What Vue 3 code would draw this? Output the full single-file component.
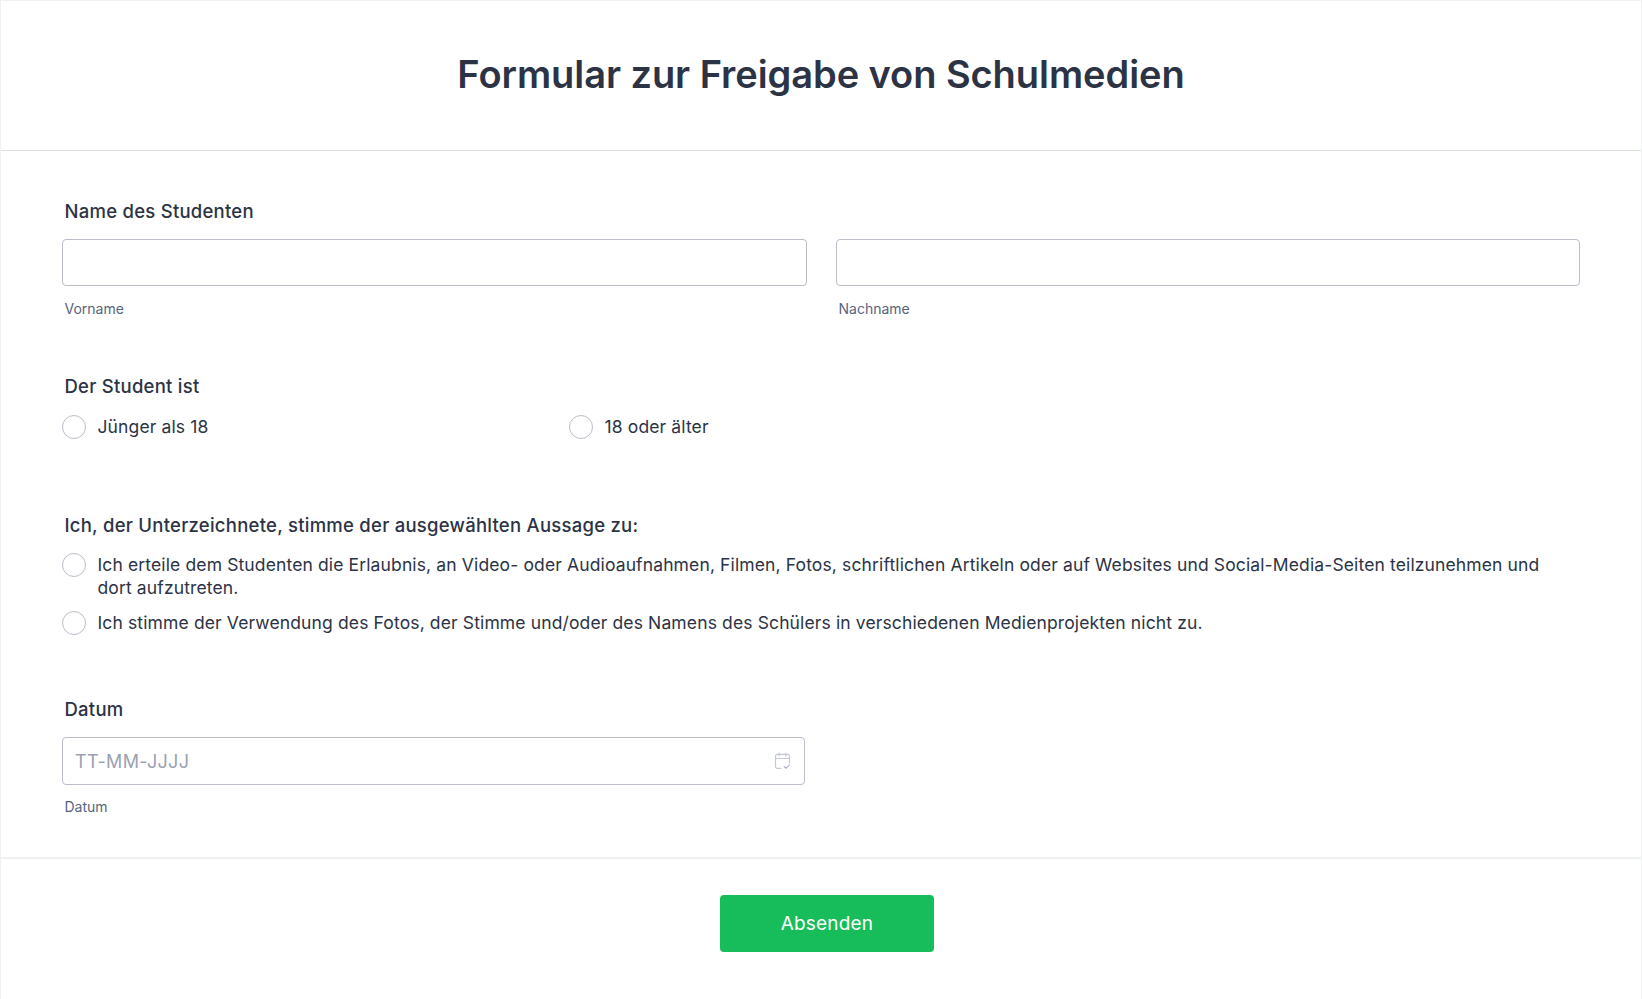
<script setup>
const ages = ['Jünger als 18', '18 oder älter']
const consents = [
  'Ich erteile dem Studenten die Erlaubnis, an Video- oder Audioaufnahmen, Filmen, Fotos, schriftlichen Artikeln oder auf Websites und Social-Media-Seiten teilzunehmen und dort aufzutreten.',
  'Ich stimme der Verwendung des Fotos, der Stimme und/oder des Namens des Schülers in verschiedenen Medienprojekten nicht zu.'
]
</script>

<template>
  <main class="card">
    <header class="head">
      <h1>Formular zur Freigabe von Schulmedien</h1>
    </header>
    <form class="body" @submit.prevent>
      <section class="field name-field">
        <label class="label">Name des Studenten</label>
        <div class="name-grid">
          <div>
            <input class="input" type="text" />
            <div class="sub">Vorname</div>
          </div>
          <div>
            <input class="input" type="text" />
            <div class="sub">Nachname</div>
          </div>
        </div>
      </section>

      <section class="field age-field">
        <label class="label">Der Student ist</label>
        <div class="age-grid">
          <div v-for="a in ages" :key="a" class="opt">
            <span class="radio"></span><span class="opt-text">{{ a }}</span>
          </div>
        </div>
      </section>

      <section class="field consent-field">
        <label class="label">Ich, der Unterzeichnete, stimme der ausgewählten Aussage zu:</label>
        <div class="consent-list">
          <div v-for="c in consents" :key="c" class="opt">
            <span class="radio"></span><span class="opt-text">{{ c }}</span>
          </div>
        </div>
      </section>

      <section class="field date-field">
        <label class="label">Datum</label>
        <div class="date-box">
          <input class="input date-input" type="text" placeholder="TT-MM-JJJJ" />
          <svg class="cal" viewBox="0 0 18 18" fill="none" stroke="#c3c8d3" stroke-width="1.2" stroke-linecap="round" stroke-linejoin="round">
            <path d="M7.5 16.8H3.6a2 2 0 0 1-2-2V4a2 2 0 0 1 2-2h10.8a2 2 0 0 1 2 2v7" />
            <path d="M1.6 6.4h14.8M5.4 .6v3.2M12.6 .6v3.2" />
            <path d="M10.8 14.8l1.9 1.9 3.7-3.7" stroke="#aeb4c1" />
          </svg>
        </div>
        <div class="sub">Datum</div>
      </section>
    </form>
    <footer class="foot">
      <button class="submit" type="button">Absenden</button>
    </footer>
  </main>
</template>

<style>
html, body { background: #fff; }
</style>

<style scoped>
.card {
  box-sizing: border-box;
  width: 1642px;
  height: 999px;
  overflow: hidden;
  border-left: 1px solid #f0f1f5;
  border-right: 1px solid #f0f1f5;
  border-top: 1px solid #f0f1f5;
  font-family: Inter, "Liberation Sans", sans-serif;
  color: #2c3345;
  background: #fff;
}
.head {
  box-sizing: border-box;
  height: 150px;
  border-bottom: 1px solid #dcdee8;
  display: flex;
  justify-content: center;
  padding-top: 48px;
}
h1 {
  margin: 0;
  font-size: 38px;
  line-height: 50px;
  font-weight: 600;
  letter-spacing: -0.06px;
}
.body {
  box-sizing: border-box;
  height: 708px;
  padding: 0 61px;
  border-bottom: 2px solid #eff0f4;
}
.field { display: block; }
.label {
  display: block;
  padding-left: 2.5px;
  font-size: 18.5px;
  line-height: 22px;
  font-weight: 500;
  letter-spacing: 0.25px;
}
.name-field { padding-top: 49px; }
.name-grid {
  display: grid;
  grid-template-columns: 745px 744px;
  gap: 29px;
  margin-top: 17px;
}
.input {
  display: block;
  box-sizing: border-box;
  width: 100%;
  height: 47px;
  border: 1px solid #b8bdc9;
  border-radius: 4px;
  background: #fff;
  outline: none;
  padding: 0 12px;
  font: inherit;
  font-size: 18px;
  letter-spacing: 0.3px;
}
.sub {
  padding-left: 2.5px;
  margin-top: 14px;
  font-size: 14px;
  line-height: 18px;
  color: #57647e;
}
.age-field { padding-top: 57px; }
.age-grid {
  display: grid;
  grid-template-columns: 507px 1fr;
  margin-top: 18px;
}
.opt {
  display: flex;
  gap: 11.5px;
  font-size: 17.5px;
  letter-spacing: 0.13px;
  line-height: 23px;
}
.opt-text { max-width: 1460px; }
.radio {
  flex: none;
  box-sizing: border-box;
  width: 24px;
  height: 24px;
  border: 1px solid #b8bdc9;
  border-radius: 50%;
  background: #fff;
}
.consent-field { padding-top: 75px; }
.consent-list {
  display: flex;
  flex-direction: column;
  gap: 12px;
  margin-top: 17px;
}
.date-field { padding-top: 63px; }
.date-box {
  position: relative;
  width: 743px;
  margin-top: 17px;
}
.date-input { height: 48px; }
.date-field .sub { margin-top: 13px; }
.date-input::placeholder { color: #9aa1b1; opacity: 1; }
.cal {
  position: absolute;
  right: 14px;
  top: 15px;
  width: 17px;
  height: 18px;
}
.foot {
  display: flex;
  justify-content: center;
  padding: 36px 0 0 12px;
}
.submit {
  width: 214px;
  height: 57px;
  border: 0;
  border-radius: 4px;
  background: #18bd5b;
  color: #fff;
  font: inherit;
  font-size: 19px;
  font-weight: 400;
  letter-spacing: 0.2px;
}
</style>
